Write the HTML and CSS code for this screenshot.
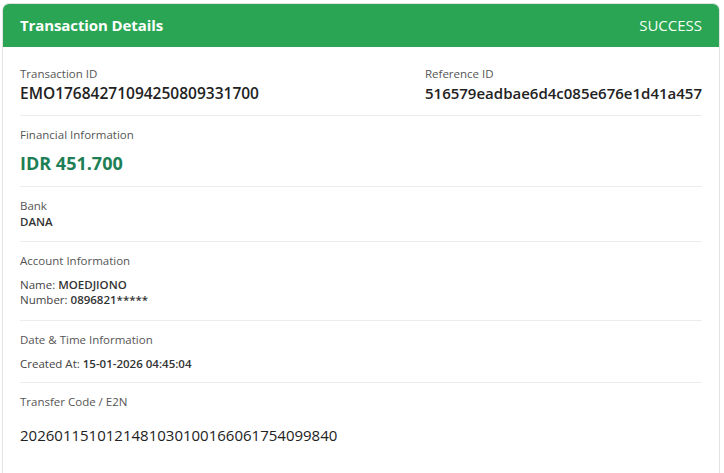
FILE: index.html
```html
<!DOCTYPE html>
<html>
<head>
<meta charset="utf-8">
<link rel="stylesheet" href="styles.css">
</head>
<body>
<div class="card">
  <div class="card-header">
    <div class="title">Transaction Details</div>
    <div class="status">SUCCESS</div>
  </div>
  <div class="card-body">
    <div class="section split">
      <div class="field">
        <div class="label">Transaction ID</div>
        <div class="value">EMO17684271094250809331700</div>
      </div>
      <div class="field">
        <div class="label">Reference ID</div>
        <div class="value">516579eadbae6d4c085e676e1d41a457</div>
      </div>
    </div>
    <div class="section">
      <div class="label">Financial Information</div>
      <div class="amount">IDR 451.700</div>
    </div>
    <div class="section">
      <div class="label">Bank</div>
      <div class="small-strong">DANA</div>
    </div>
    <div class="section">
      <div class="label">Account Information</div>
      <div class="lines">
        <div class="line">Name: <strong>MOEDJIONO</strong></div>
        <div class="line">Number: <strong>0896821*****</strong></div>
      </div>
    </div>
    <div class="section">
      <div class="label">Date &amp; Time Information</div>
      <div class="lines">
        <div class="line">Created At: <strong>15-01-2026 04:45:04</strong></div>
      </div>
    </div>
    <div class="section last">
      <div class="label">Transfer Code / E2N</div>
      <div class="code">2026011510121481030100166061754099840</div>
    </div>
  </div>
</div>
</body>
</html>
```

FILE: styles.css
```css
html, body {
  margin: 0;
  padding: 0;
  background: #ffffff;
}
body {
  padding: 3px 4px 0 2px;
  font-family: "Open Sans", "Noto Sans", sans-serif;
  color: #212529;
}
.card {
  border: 1px solid #e3e3e3;
  border-bottom: none;
  border-radius: 7px 7px 0 0;
  background: #fff;
  height: 480px;
  overflow: hidden;
}
.card-header {
  background: #2aa553;
  height: 44px;
  margin: -1px -1px 0 -1px;
  border-radius: 7px 7px 0 0;
  display: flex;
  align-items: center;
  justify-content: space-between;
  padding: 0 18px;
  color: #fff;
}
.title {
  font-weight: 700;
  font-size: 15px;
  letter-spacing: -0.1px;
}
.status {
  font-size: 15px;
  color: #f4fff6;
}
.card-body {
  padding: 0 17px;
}
.section {
  padding: 11px 0 11px;
  border-bottom: 1px solid #ececec;
  display: flex;
  flex-direction: column;
}
.section.split {
  flex-direction: row;
  justify-content: space-between;
  padding-top: 19px;
  padding-bottom: 12px;
}
.section.last {
  border-bottom: none;
}
.label {
  font-size: 11.5px;
  line-height: 16px;
  color: #555;
}
.field .value {
  margin-top: 1px;
  font-size: 15.5px;
  font-weight: 600;
  line-height: 20px;
  color: #222;
}
.field + .field .value {
  font-size: 15px;
}
.amount {
  margin-top: 8px;
  font-size: 18px;
  font-weight: 700;
  line-height: 24px;
  color: #1d7f55;
}
.small-strong {
  font-size: 11.5px;
  font-weight: 600;
  line-height: 16px;
  color: #333;
}
.lines {
  margin-top: 8px;
  display: flex;
  flex-direction: column;
}
.line {
  font-size: 11.5px;
  line-height: 15px;
  color: #444;
}
.line strong {
  font-weight: 600;
  color: #333;
}
.section:nth-child(4) {
  padding-bottom: 13px;
}
.code {
  margin-top: 15px;
  font-size: 15px;
  line-height: 20px;
  color: #222;
}
```
